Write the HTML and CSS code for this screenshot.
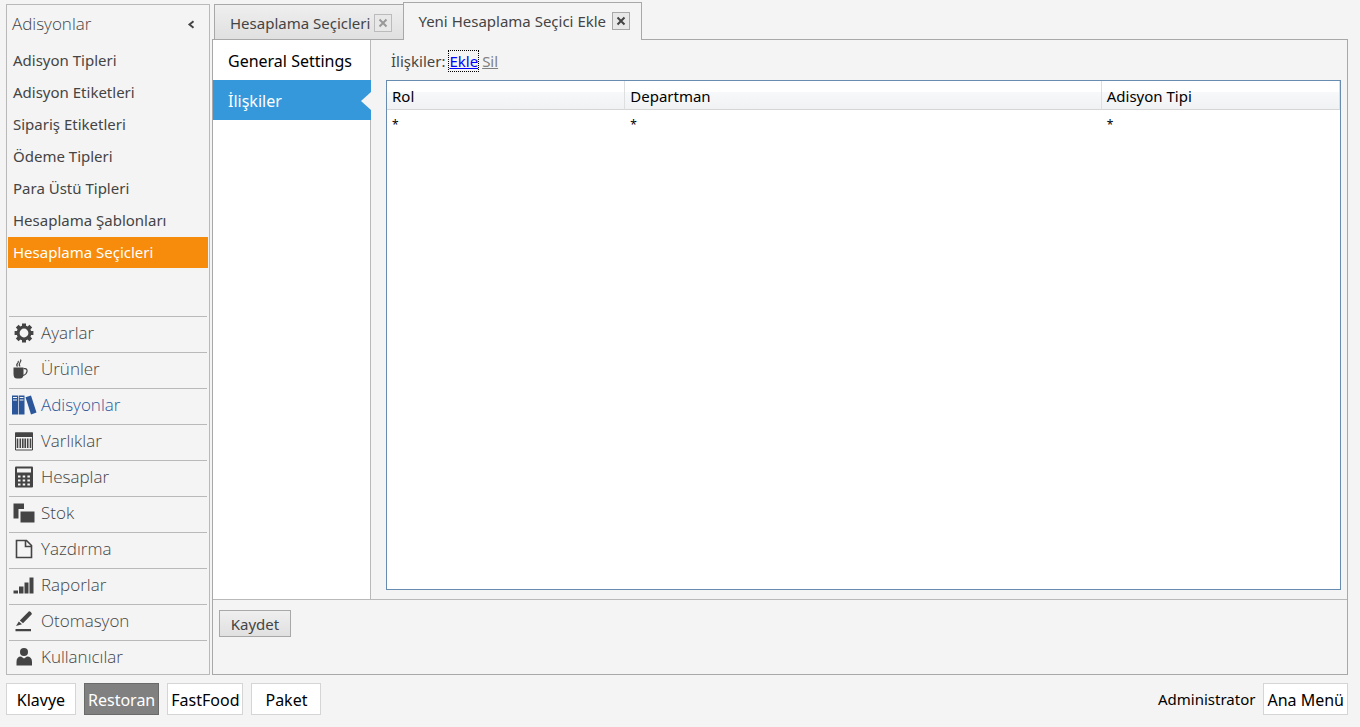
FILE: index.html
```html
<!DOCTYPE html>
<html lang="tr">
<head>
<meta charset="utf-8">
<title>Yeni Hesaplama Seçici Ekle</title>
<link rel="stylesheet" href="styles.css">
</head>
<body>
<div class="workspace">
  <aside class="sidebar">
    <header class="sidebar-head">
      <h1 class="sidebar-title">Adisyonlar</h1>
      <button class="collapse" type="button" aria-label="Daralt">
        <svg width="8" height="9" viewBox="0 0 8 9"><path d="M6.500 1.300L2.500 4.500L6.500 7.700" fill="none" stroke="#444" stroke-width="2"/></svg>
      </button>
    </header>
    <ul class="links">
      <li><a class="link" href="#">Adisyon Tipleri</a></li>
      <li><a class="link" href="#">Adisyon Etiketleri</a></li>
      <li><a class="link" href="#">Sipariş Etiketleri</a></li>
      <li><a class="link" href="#">Ödeme Tipleri</a></li>
      <li><a class="link" href="#">Para Üstü Tipleri</a></li>
      <li><a class="link" href="#">Hesaplama Şablonları</a></li>
      <li><a class="link link-active" href="#">Hesaplama Seçicleri</a></li>
    </ul>
    <nav class="modules">
      <a class="module" href="#">
        <svg class="icon" viewBox="0 0 26 24"><circle cx="13" cy="12" r="5.900" fill="none" stroke="currentColor" stroke-width="3"/><g stroke="currentColor" stroke-width="4"><path d="M13 2.600V5.500M13 18.500V21.400M3.600 12H6.500M19.500 12H22.400"/><path d="M6.200 5.200L8.400 7.400M17.600 16.600L19.800 18.800M6.200 18.800L8.400 16.600M17.600 7.400L19.800 5.200"/></g></svg>
        Ayarlar</a>
      <a class="module" href="#">
        <svg class="icon" viewBox="0 0 26 24"><path d="M2.500 10.500H12.500V17Q12.500 21.500 9 21.500H6Q2.500 21.500 2.500 17Z" fill="currentColor"/><path d="M12.500 11.700H14Q16.500 12 16 14.500Q15.500 17.500 12 18.500M6.500 9.500Q5 8 6.500 6.500T7 4M9 9.500Q7.500 7.500 9 5.500T9.500 2.500" fill="none" stroke="currentColor" stroke-width="1.200"/></svg>
        Ürünler</a>
      <a class="module module-active" href="#">
        <svg class="icon" viewBox="0 0 26 24"><path d="M1 2.500H7V21.500H1ZM7.700 2.500H13.500V21.500H7.700ZM14.500 4.300L20 2.500L25.500 19.500L20 21.500Z" fill="currentColor"/><path d="M2 4.500H6M2 7H6M8.700 4.500H12.500M8.700 7H12.500" stroke="#f4f4f4" stroke-width="1"/></svg>
        Adisyonlar</a>
      <a class="module" href="#">
        <svg class="icon" viewBox="0 0 26 24"><path d="M4.500 4H21.500V21H4.500Z" fill="none" stroke="currentColor" stroke-width="1"/><path d="M4 3.500H22V8H4Z" fill="currentColor"/><path d="M6.500 9.500V19M9.300 9.500V19M11.800 9.500V19M14.200 9.500V19M16.700 9.500V19M19.500 9.500V19" stroke="currentColor" stroke-width="1.600"/></svg>
        Varlıklar</a>
      <a class="module" href="#">
        <svg class="icon" viewBox="0 0 26 24"><rect x="4" y="1.500" width="18" height="21" rx="1" fill="currentColor"/><path d="M6 3.500H20V7.500H6Z" fill="#f4f4f4"/><path d="M7 11.500H19M7 15.500H19M7 19.500H19" stroke="#f4f4f4" stroke-width="2" stroke-dasharray="2.500 2.200"/></svg>
        Hesaplar</a>
      <a class="module" href="#">
        <svg class="icon" viewBox="0 0 26 24"><path d="M2.500 2.500H13V8H7.500V17.500H2.500ZM9.500 10.500H23.500V21.500H9.500Z" fill="currentColor"/></svg>
        Stok</a>
      <a class="module" href="#">
        <svg class="icon" viewBox="0 0 26 24"><path d="M5.500 3.500H15.500L20.500 8.500V20.500H5.500ZM14.500 4V9.500H20" fill="none" stroke="currentColor" stroke-width="1.600"/></svg>
        Yazdırma</a>
      <a class="module" href="#">
        <svg class="icon" viewBox="0 0 26 24"><path d="M2.500 17.500H7V20.500H2.500ZM8 13.500H12.500V20.500H8ZM13.500 9.500H17.500V20.500H13.500ZM18.500 4.500H22.500V20.500H18.500Z" fill="currentColor"/></svg>
        Raporlar</a>
      <a class="module" href="#">
        <svg class="icon" viewBox="0 0 26 24"><path d="M8.800 11.500L18 2.300Q20 2 21 5L12 14.200ZM7.800 12.500L11 15.300L5 17ZM4.500 20H20V22.300H4.500Z" fill="currentColor"/></svg>
        Otomasyon</a>
      <a class="module" href="#">
        <svg class="icon" viewBox="0 0 26 24"><circle cx="13" cy="7" r="4" fill="currentColor"/><path d="M5.500 20.500V17Q5.500 11.500 10 11.500L13 13.500L16 11.500Q21 11.500 21 17V20.500Z" fill="currentColor"/></svg>
        Kullanıcılar</a>
    </nav>
  </aside>

  <main class="main">
    <div class="tabs">
      <div class="tab">
        <span>Hesaplama Seçicleri</span>
        <button class="close close-dim" type="button" aria-label="Kapat"><svg width="10" height="10" viewBox="0 0 10 10"><path d="M1.500 1.500L8.500 8.500M8.500 1.500L1.500 8.500" stroke="currentColor" stroke-width="2"/></svg></button>
      </div>
      <div class="tab tab-active">
        <span>Yeni Hesaplama Seçici Ekle</span>
        <button class="close" type="button" aria-label="Kapat"><svg width="10" height="10" viewBox="0 0 10 10"><path d="M1.500 1.500L8.500 8.500M8.500 1.500L1.500 8.500" stroke="currentColor" stroke-width="2"/></svg></button>
      </div>
    </div>
    <section class="panel">
      <div class="panel-body">
        <nav class="sections">
          <a class="section" href="#">General Settings</a>
          <a class="section section-active" href="#">İlişkiler</a>
        </nav>
        <div class="content">
          <div class="toolbar">
            <span>İlişkiler:</span>
            <a class="add" href="#">Ekle</a>
            <a class="remove" href="#">Sil</a>
          </div>
          <div class="grid">
            <table class="table">
              <colgroup><col class="col-quarter"><col class="col-half"><col class="col-quarter"></colgroup>
              <thead><tr><th>Rol</th><th>Departman</th><th>Adisyon Tipi</th></tr></thead>
              <tbody><tr><td>*</td><td>*</td><td>*</td></tr></tbody>
            </table>
          </div>
        </div>
      </div>
      <div class="actions"><button class="save" type="button">Kaydet</button></div>
    </section>
  </main>
</div>

<footer class="footer">
  <button class="foot-btn" type="button">Klavye</button>
  <button class="foot-btn foot-btn-active" type="button">Restoran</button>
  <button class="foot-btn" type="button">FastFood</button>
  <button class="foot-btn" type="button">Paket</button>
  <span class="user">Administrator</span>
  <button class="foot-btn" type="button">Ana Menü</button>
</footer>
</body>
</html>
```
FILE: styles.css
```css
* { box-sizing: border-box; }

body {
  margin: 0;
  min-height: 100vh;
  padding: 2px 12px 12px 6px;
  display: flex;
  flex-direction: column;
  gap: 8px;
  background: #f4f4f4;
  color: #444;
  font: 15px/20px "Noto Sans", "Open Sans", sans-serif;
}

button { font: inherit; padding: 0; cursor: pointer; }
a { color: inherit; text-decoration: none; }

.workspace { flex: 1; display: flex; gap: 2px; }

.sidebar {
  width: 204px;
  flex: none;
  margin-top: 2px;
  border: 1px solid #b9b9b9;
  display: flex;
  flex-direction: column;
}
.sidebar-head {
  height: 40px;
  padding: 0 14px 2px 5px;
  display: flex;
  align-items: center;
  justify-content: space-between;
}
.sidebar-title { margin: 0; color: #444; font: 300 17px/24px "Open Sans", sans-serif; }
.collapse { display: flex; border: 0; background: none; }

.links { list-style: none; margin: 0; padding: 0 1px; }
.link { display: block; height: 31px; margin-bottom: 1px; padding: 0 5px; line-height: 31px; }
.link-active { background: #f78b0b; color: #fff; }

.modules { margin-top: auto; padding: 0 2px; }
.module {
  display: flex;
  align-items: center;
  gap: 4px;
  height: 36px;
  padding: 0 0 4px 2px;
  border-top: 1px solid #b9b9b9;
  font: 300 17px/24px "Open Sans", sans-serif;
  color: #444;
}
.module:last-child { height: 34px; padding-bottom: 2px; }
.module-active { color: #2b579a; }
.icon { width: 26px; height: 24px; flex: none; }

.main { flex: 1; display: flex; flex-direction: column; min-width: 0; }

.tabs { display: flex; align-items: flex-end; padding-left: 2px; }
.tab {
  display: flex;
  align-items: center;
  gap: 4px;
  height: 35px;
  padding: 2px 11px 0 15px;
  border: 1px solid #a8a8a8;
  border-width: 1px 0 0 1px;
  background: linear-gradient(#efefef, #e0e0e0);
  white-space: nowrap;
}
.tab-active {
  height: 38px;
  margin-bottom: -1px;
  padding: 0 11px 2px 14px;
  gap: 6px;
  border-right-width: 1px;
  background: #f4f4f4;
  z-index: 1;
}
.close {
  width: 18px;
  height: 18px;
  display: flex;
  align-items: center;
  justify-content: center;
  border: 1px solid #a8a8a8;
  background: #e8e8e8;
  color: #444;
}
.close-dim { color: #999; border-color: #bbb; }

.panel { flex: 1; display: flex; flex-direction: column; border: 1px solid #a8a8a8; }
.panel-body { flex: 1; display: flex; border-bottom: 1px solid #b9b9b9; }

.sections { width: 158px; flex: none; background: #fff; border-right: 1px solid #b9b9b9; }
.section {
  display: flex;
  align-items: center;
  justify-content: space-between;
  height: 40px;
  padding: 2px 0 0 15px;
  color: #000;
  font-size: 16px;
}
.section-active { margin-right: -1px; background: #3498db; color: #fff; }
.section-active::after {
  content: "";
  border: 9px solid transparent;
  border-right: 10px solid #f4f4f4;
  border-left: 0;
}

.content { flex: 1; min-width: 0; padding: 10px 6px 9px 15px; display: flex; flex-direction: column; gap: 8px; }
.toolbar { display: flex; gap: 4px; height: 22px; padding-left: 5px; align-items: center; }
.add, .remove { text-decoration: underline; }
.add { color: #00f; outline: 1px dotted #000; }
.remove { color: #808080; }

.grid { flex: 1; border: 1px solid #688caf; background: #fff; color: #000; }
.table { width: 100%; table-layout: fixed; border-collapse: separate; border-spacing: 0; }
.col-quarter { width: 25%; }
.col-half { width: 50%; }
.table th {
  height: 29px;
  padding: 2px 5px 0;
  text-align: left;
  font-weight: 400;
  border-right: 1px solid #dedfe1;
  border-bottom: 1px solid #d5d5d5;
  background: linear-gradient(#fff 40%, #f7f8fa 40%, #f1f2f4);
}
.table td { height: 30px; padding: 0 5px; font-size: 12px; }

.actions { height: 74px; padding: 10px 6px; }
.save {
  width: 72px;
  height: 27px;
  border: 1px solid #a8a8a8;
  background: linear-gradient(#efefef, #e0e0e0);
  color: #444;
}

.footer { display: flex; gap: 8px; align-items: center; color: #000; font-size: 16px; }
.foot-btn {
  min-width: 70px;
  height: 32px;
  padding: 1px 3px 0;
  border: 1px solid #d5d5d5;
  background: #fff;
  color: #000;
}
.foot-btn-active { background: #808080; border-color: #6a6a6a; color: #fff; }
.user { margin-left: auto; font-size: 15px; }
```
